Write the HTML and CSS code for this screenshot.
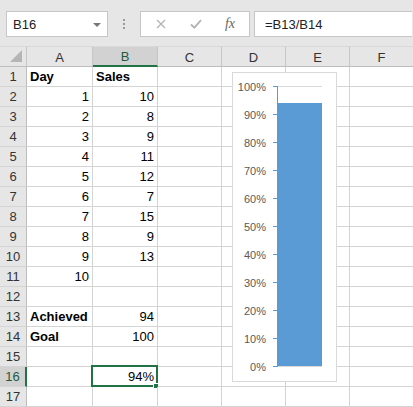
FILE: index.html
```html
<!DOCTYPE html>
<html>
<head>
<meta charset="utf-8">
<link rel="stylesheet" href="styles.css">
</head>
<body>
<div class="app">
  <div class="toolbar">
    <div class="namebox"><span class="ref">B16</span><span class="caret"></span></div>
    <div class="grip"><i></i><i></i><i></i></div>
    <div class="fxbox">
      <span class="slot"><svg width="10" height="10" viewBox="0 0 10 10"><path d="M1 1L9 9M9 1L1 9" stroke="#b3b3b3" stroke-width="1.3" fill="none"/></svg></span>
      <span class="slot"><svg width="12" height="10" viewBox="0 0 12 10"><path d="M1 5.5L4.3 8.6L11 1.2" stroke="#b3b3b3" stroke-width="1.8" fill="none"/></svg></span>
      <span class="slot fx">fx</span>
    </div>
    <div class="formula">=B13/B14</div>
  </div>
  <div class="sheet">
    <div class="hd corner"><svg width="13" height="13" viewBox="0 0 13 13"><path d="M12 0V12H0Z" fill="#b5b5b5"/></svg></div>
    <div class="hd col">A</div><div class="hd col sel">B</div><div class="hd col">C</div><div class="hd col">D</div><div class="hd col">E</div><div class="hd col">F</div>

    <div class="hd row">1</div><div class="c b">Day</div><div class="c b">Sales</div><div class="c"></div><div class="c"></div><div class="c"></div><div class="c"></div>
    <div class="hd row">2</div><div class="c n">1</div><div class="c n">10</div><div class="c"></div><div class="c"></div><div class="c"></div><div class="c"></div>
    <div class="hd row">3</div><div class="c n">2</div><div class="c n">8</div><div class="c"></div><div class="c"></div><div class="c"></div><div class="c"></div>
    <div class="hd row">4</div><div class="c n">3</div><div class="c n">9</div><div class="c"></div><div class="c"></div><div class="c"></div><div class="c"></div>
    <div class="hd row">5</div><div class="c n">4</div><div class="c n">11</div><div class="c"></div><div class="c"></div><div class="c"></div><div class="c"></div>
    <div class="hd row">6</div><div class="c n">5</div><div class="c n">12</div><div class="c"></div><div class="c"></div><div class="c"></div><div class="c"></div>
    <div class="hd row">7</div><div class="c n">6</div><div class="c n">7</div><div class="c"></div><div class="c"></div><div class="c"></div><div class="c"></div>
    <div class="hd row">8</div><div class="c n">7</div><div class="c n">15</div><div class="c"></div><div class="c"></div><div class="c"></div><div class="c"></div>
    <div class="hd row">9</div><div class="c n">8</div><div class="c n">9</div><div class="c"></div><div class="c"></div><div class="c"></div><div class="c"></div>
    <div class="hd row">10</div><div class="c n">9</div><div class="c n">13</div><div class="c"></div><div class="c"></div><div class="c"></div><div class="c"></div>
    <div class="hd row">11</div><div class="c n">10</div><div class="c"></div><div class="c"></div><div class="c"></div><div class="c"></div><div class="c"></div>
    <div class="hd row">12</div><div class="c"></div><div class="c"></div><div class="c"></div><div class="c"></div><div class="c"></div><div class="c"></div>
    <div class="hd row">13</div><div class="c b">Achieved</div><div class="c n">94</div><div class="c"></div><div class="c"></div><div class="c"></div><div class="c"></div>
    <div class="hd row">14</div><div class="c b">Goal</div><div class="c n">100</div><div class="c"></div><div class="c"></div><div class="c"></div><div class="c"></div>
    <div class="hd row">15</div><div class="c"></div><div class="c"></div><div class="c"></div><div class="c"></div><div class="c"></div><div class="c"></div>
    <div class="hd row sel">16</div><div class="c"></div><div class="c n active">94%<span class="selbox"></span><span class="handle"></span></div><div class="c"></div><div class="c"></div><div class="c"></div><div class="c"></div>
    <div class="hd row">17</div><div class="c"></div><div class="c"></div><div class="c"></div><div class="c"></div><div class="c"></div><div class="c"></div>
  </div>
  <div class="chart">
    <svg width="105" height="310" viewBox="0 0 105 310">
      <rect x="0.5" y="0.5" width="104" height="309" fill="#fff" stroke="#d9d9d9"/>
      <line x1="46" y1="14.5" x2="90" y2="14.5" stroke="#d9d9d9"/>
      <rect x="46" y="31" width="44" height="263" fill="#5b9bd5"/>
      <line x1="45" y1="294.5" x2="90" y2="294.5" stroke="#d9d9d9"/>
      <line x1="45.5" y1="14" x2="45.5" y2="295" stroke="#5b9bd5"/>
      <g stroke="#5b9bd5">
        <line x1="41" y1="14.5" x2="45" y2="14.5"/>
        <line x1="41" y1="42.5" x2="45" y2="42.5"/>
        <line x1="41" y1="70.5" x2="45" y2="70.5"/>
        <line x1="41" y1="98.5" x2="45" y2="98.5"/>
        <line x1="41" y1="126.5" x2="45" y2="126.5"/>
        <line x1="41" y1="154.5" x2="45" y2="154.5"/>
        <line x1="41" y1="182.5" x2="45" y2="182.5"/>
        <line x1="41" y1="210.5" x2="45" y2="210.5"/>
        <line x1="41" y1="238.5" x2="45" y2="238.5"/>
        <line x1="41" y1="266.5" x2="45" y2="266.5"/>
        <line x1="41" y1="294.5" x2="45" y2="294.5"/>
      </g>
      <g class="lbl" text-anchor="end">
        <text x="34" y="18.5">100%</text>
        <text x="34" y="46.5">90%</text>
        <text x="34" y="74.5">80%</text>
        <text x="34" y="102.5">70%</text>
        <text x="34" y="130.5">60%</text>
        <text x="34" y="158.5">50%</text>
        <text x="34" y="186.5">40%</text>
        <text x="34" y="214.5">30%</text>
        <text x="34" y="242.5">20%</text>
        <text x="34" y="270.5">10%</text>
        <text x="34" y="298.5">0%</text>
      </g>
    </svg>
  </div>
</div>
</body>
</html>
```
FILE: styles.css
```css
* { box-sizing: border-box; }
html, body { margin: 0; padding: 0; }
body {
  font-family: "Liberation Sans", Arial, sans-serif;
  font-size: 13px;
  color: #000;
  width: 413px;
  height: 407px;
  overflow: hidden;
  background: #fff;
}
.app { position: relative; width: 413px; height: 407px; overflow: hidden; }

.toolbar {
  height: 46px;
  background: #e6e6e6;
  display: flex;
  align-items: flex-start;
  padding: 11px 0 0 6px;
}
.namebox {
  width: 102px;
  height: 26px;
  background: #fff;
  border: 1px solid #c6c6c6;
  display: flex;
  align-items: center;
  justify-content: space-between;
  padding: 0 6px 0 6px;
  color: #222;
}
.caret {
  width: 0; height: 0;
  border-left: 4px solid transparent;
  border-right: 4px solid transparent;
  border-top: 4px solid #777;
  margin-top: 1px;
}
.grip {
  width: 32px;
  height: 26px;
  display: flex;
  flex-direction: column;
  align-items: center;
  justify-content: center;
  gap: 2px;
}
.grip i { display: block; width: 2px; height: 2px; background: #9a9a9a; }
.fxbox {
  width: 110px;
  height: 26px;
  background: #fff;
  border: 1px solid #c6c6c6;
  display: grid;
  grid-template-columns: 40px 30px 38px;
  align-items: center;
}
.slot { display: flex; justify-content: center; align-items: center; }
.fx {
  font-family: "Liberation Serif", "Times New Roman", serif;
  font-style: italic;
  font-size: 14px;
  color: #666;
}
.formula {
  margin-left: 4px;
  width: 158px;
  height: 26px;
  background: #fff;
  border: 1px solid #c6c6c6;
  border-right: none;
  padding-left: 10px;
  display: flex;
  align-items: center;
  color: #222;
}

.sheet {
  display: grid;
  grid-template-columns: 27px 66px 65px 64px 64px 64px 64px;
  grid-template-rows: 21px repeat(17, 20px);
  width: 414px;
}
.hd {
  background: #e6e6e6;
  color: #333;
  display: flex;
  align-items: center;
  justify-content: center;
}
.hd.col {
  border-top: 1px solid #d9d9d9;
  border-right: 1px solid #c6c6c6;
  border-bottom: 1px solid #bdbdbd;
  padding-top: 1px;
}
.hd.col.sel {
  background: #d2d2d2;
  border-bottom: 2px solid #217346;
  color: #1e5b3c;
}
.corner {
  border-top: 1px solid #d9d9d9;
  border-right: 1px solid #c6c6c6;
  border-bottom: 1px solid #bdbdbd;
  align-items: flex-end;
  justify-content: flex-end;
  padding: 0 3px 3px 0;
}
.hd.row {
  border-right: 1px solid #bdbdbd;
  border-bottom: 1px solid #d4d4d4;
}
.hd.row.sel {
  background: #d2d2d2;
  border-right: 2px solid #217346;
  color: #1e5b3c;
}
.c {
  border-right: 1px solid #d4d4d4;
  border-bottom: 1px solid #d4d4d4;
  display: flex;
  align-items: center;
  padding: 0 3px;
  white-space: nowrap;
  position: relative;
}
.c.b { font-weight: bold; }
.c.n { justify-content: flex-end; }
.selbox {
  position: absolute;
  left: -2px;
  top: -2px;
  width: 67px;
  height: 22px;
  border: 2px solid #217346;
}
.handle {
  position: absolute;
  left: 60px;
  top: 16px;
  width: 6px;
  height: 6px;
  background: #217346;
  border: 1px solid #fff;
}

.chart {
  position: absolute;
  left: 232px;
  top: 72px;
  width: 105px;
  height: 310px;
}
.chart svg { display: block; }
.lbl text {
  font-family: "Liberation Sans", Arial, sans-serif;
  font-size: 11px;
  fill: #595959;
}
```
